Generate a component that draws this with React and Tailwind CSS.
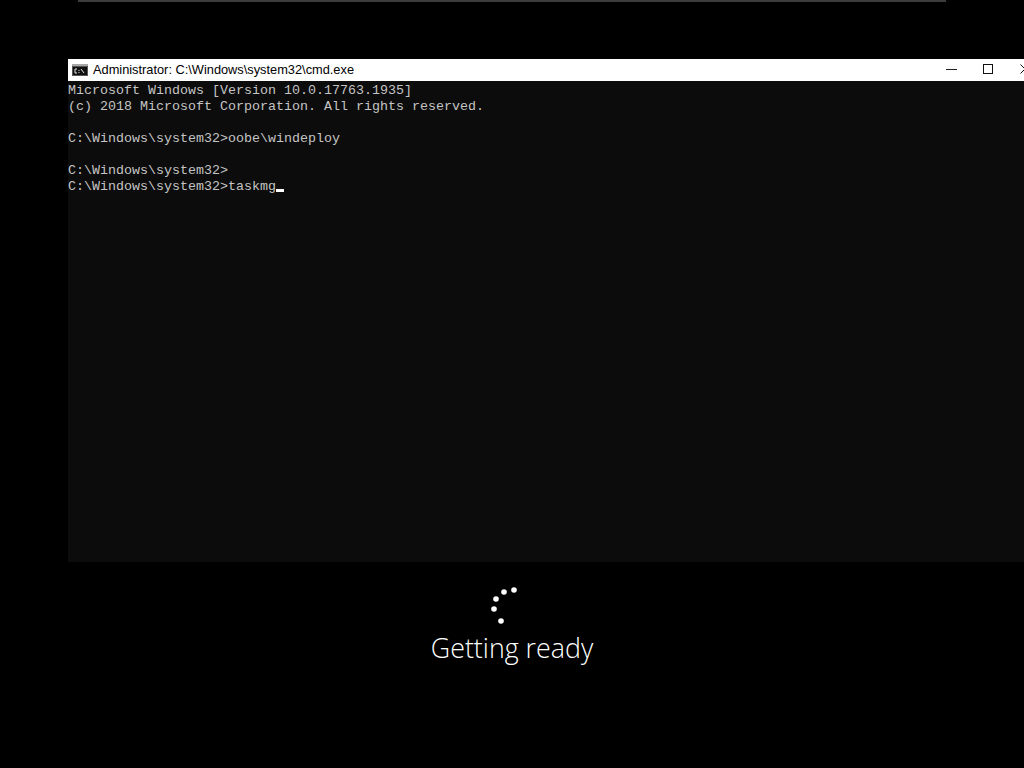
export default function App() {
  const lines = [
    "Microsoft Windows [Version 10.0.17763.1935]",
    "(c) 2018 Microsoft Corporation. All rights reserved.",
    "",
    "C:\\Windows\\system32>oobe\\windeploy",
    "",
    "C:\\Windows\\system32>",
  ];
  return (
    <div className="w-[1024px] h-[768px] overflow-hidden bg-black flex flex-col">
      <div className="ml-[78px] w-[868px] h-[2px] shrink-0 bg-[#3c3c3c]" />
      <div className="ml-[68px] mt-[57px] w-[980px] shrink-0 flex flex-col">
        <div className="h-[22px] bg-white flex items-center pl-[4px] relative">
          <svg width="16" height="12" viewBox="0 0 16 12" className="shrink-0">
            <rect x="0" y="0" width="16" height="12" fill="#555" />
            <rect x="0" y="0" width="16" height="2" fill="#a8a8a8" />
            <rect x="1" y="3" width="14" height="8" fill="#111" />
            <path d="M5 5H3V9H5M7 6V6.9M7 8V8.9M9 5L12 9" stroke="#e8e8e8" strokeWidth="1" fill="none" />
          </svg>
          <span className="ml-[5px] text-[12.8px] leading-[22px] text-black whitespace-pre" style={{ fontFamily: '"Liberation Sans", sans-serif' }}>
            Administrator: C:\Windows\system32\cmd.exe
          </span>
          <svg width="12" height="2" viewBox="0 0 12 2" className="absolute left-[878px] top-[10px]">
            <rect width="11" height="1" fill="#222" />
          </svg>
          <svg width="10" height="10" viewBox="0 0 10 10" className="absolute left-[915px] top-[5px]">
            <rect x="0.5" y="0.5" width="9" height="9" fill="none" stroke="#111" />
          </svg>
          <svg width="10" height="10" viewBox="0 0 10 10" className="absolute left-[952px] top-[5px]">
            <path d="M0.5 0.5L9.5 9.5M9.5 0.5L0.5 9.5" stroke="#111" fill="none" />
          </svg>
        </div>
        <div
          className="h-[481px] pt-[2px] bg-[#0c0c0c] text-[#c4c4c4] text-[13.33px] leading-[16px] whitespace-pre"
          style={{ fontFamily: '"Liberation Mono", monospace' }}
        >
          {lines.map((l, i) => (
            <div key={i} className="h-[16px]">{l}</div>
          ))}
          <div className="h-[16px] flex items-start">
            <span>C:\Windows\system32&gt;taskmg</span>
            <span className="w-[8px] h-[3px] bg-white mt-[10px]" />
          </div>
        </div>
      </div>
      <div className="flex flex-col items-center mt-[23px]">
        <svg width="48" height="40" viewBox="0 0 48 40" className="shrink-0">
          <circle cx="26" cy="5" r="2.8" fill="#fff" />
          <circle cx="16" cy="7" r="2.8" fill="#fff" />
          <circle cx="8" cy="14" r="2.8" fill="#fff" />
          <circle cx="6" cy="24" r="2.8" fill="#fff" />
          <circle cx="13" cy="36" r="2.8" fill="#fff" />
        </svg>
        <div
          className="mt-[5px] text-[26.8px] leading-[36px] font-light text-white"
          style={{ fontFamily: '"Open Sans", sans-serif' }}
        >
          Getting ready
        </div>
      </div>
    </div>
  );
}
